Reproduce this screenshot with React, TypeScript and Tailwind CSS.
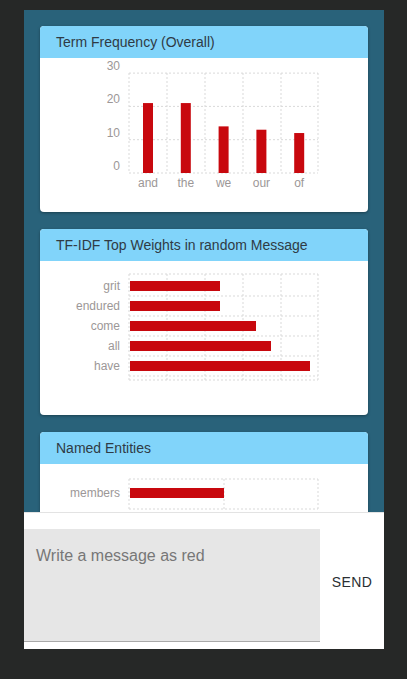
const RED = "#c8080e";
const GRID = "#d9d9d9";
const LABEL = "#9c9797";

type Item = { label: string; value: number };

const frequency: Item[] = [
  { label: "and", value: 21 },
  { label: "the", value: 21 },
  { label: "we", value: 14 },
  { label: "our", value: 13 },
  { label: "of", value: 12 },
];

const tfidf: Item[] = [
  { label: "grit", value: 90 },
  { label: "endured", value: 90 },
  { label: "come", value: 126 },
  { label: "all", value: 141 },
  { label: "have", value: 180 },
];

const vLines = [89, 127, 165, 203, 241, 278];

function Card({ title, height, children }: { title: string; height: number; children: React.ReactNode }) {
  return (
    <div className="w-[328px] shrink-0 overflow-hidden rounded bg-white shadow-[0_1px_3px_rgba(0,0,0,0.35)]" style={{ height }}>
      <div className="flex h-8 items-center bg-[#81d4fa] px-4 text-[14px] text-[#2f3b45]">{title}</div>
      {children}
    </div>
  );
}

function ColumnChart() {
  const y = (v: number) => 115 - v * 3.33;
  return (
    <svg width="328" height="154" className="block">
      {[0, 10, 20, 30].map((t) => (
        <g key={t}>
          <line x1="89" x2="278" y1={y(t)} y2={y(t)} stroke={GRID} strokeDasharray="2 2" />
          <text x="80" y={y(t) - 3} textAnchor="end" fontSize="12" fill={LABEL}>
            {t}
          </text>
        </g>
      ))}
      {vLines.map((x) => (
        <line key={x} x1={x} x2={x} y1="15" y2="115" stroke={GRID} strokeDasharray="2 2" />
      ))}
      {frequency.map((d, i) => {
        const cx = 108 + i * 37.8;
        return (
          <g key={d.label}>
            <rect x={cx - 5} y={y(d.value)} width="10" height={115 - y(d.value)} fill={RED} />
            <text x={cx} y="129" textAnchor="middle" fontSize="12" fill={LABEL}>
              {d.label}
            </text>
          </g>
        );
      })}
    </svg>
  );
}

function BarChart({
  items,
  top,
  bottom,
  offset,
  columns,
}: {
  items: Item[];
  top: number;
  bottom: number;
  offset: number;
  columns: number[];
}) {
  return (
    <svg width="328" height="154" className="block">
      {items.length > 1 &&
        items.map((_, i) => (
          <line key={i} x1="89" x2="278" y1={top + 22 + i * 20} y2={top + 22 + i * 20} stroke={GRID} strokeDasharray="2 2" />
        ))}
      <line x1="89" x2="278" y1={top} y2={top} stroke={GRID} strokeDasharray="2 2" />
      <line x1="89" x2="278" y1={bottom} y2={bottom} stroke={GRID} strokeDasharray="2 2" />
      {columns.map((x) => (
        <line key={x} x1={x} x2={x} y1={top} y2={bottom} stroke={GRID} strokeDasharray="2 2" />
      ))}
      {items.map((d, i) => {
        const by = top + offset + i * 20;
        return (
          <g key={d.label}>
            <rect x="90" y={by} width={d.value} height="10" fill={RED} />
            <text x="80" y={by + 9} textAnchor="end" fontSize="12" fill={LABEL}>
              {d.label}
            </text>
          </g>
        );
      })}
    </svg>
  );
}

export default function App() {
  return (
    <div className="min-h-screen bg-[#262827] font-['Liberation_Sans',Arial,sans-serif]">
      <div className="ml-6 w-[360px] pt-[10px]">
        {/* Scrolling dashboard */}
        <div className="flex h-[502px] flex-col gap-[17px] overflow-hidden bg-[#29627a] px-4 pt-4">
          <Card title="Term Frequency (Overall)" height={186}>
            <ColumnChart />
          </Card>
          <Card title="TF-IDF Top Weights in random Message" height={186}>
            <BarChart items={tfidf} top={13} bottom={119} offset={7} columns={vLines} />
          </Card>
          <Card title="Named Entities" height={186}>
            <BarChart items={[{ label: "members", value: 94 }]} top={15} bottom={45} offset={9} columns={[89, 184, 278]} />
          </Card>
        </div>

        {/* Message composer */}
        <div className="flex h-[137px] items-start border-t border-[#e3e3e3] bg-white pt-4">
          <textarea
            placeholder="Write a message as red"
            className="h-[113px] w-[296px] resize-none border-b border-[#a9a9a9] bg-[#e6e6e6] px-3 pt-[15px] text-[16px] leading-6 text-[#333] outline-none placeholder:text-[#777]"
          />
          <button className="flex h-[113px] flex-1 items-center justify-center pb-[6px] text-[14px] tracking-wide text-[#2a2f33]">
            SEND
          </button>
        </div>
      </div>
    </div>
  );
}
